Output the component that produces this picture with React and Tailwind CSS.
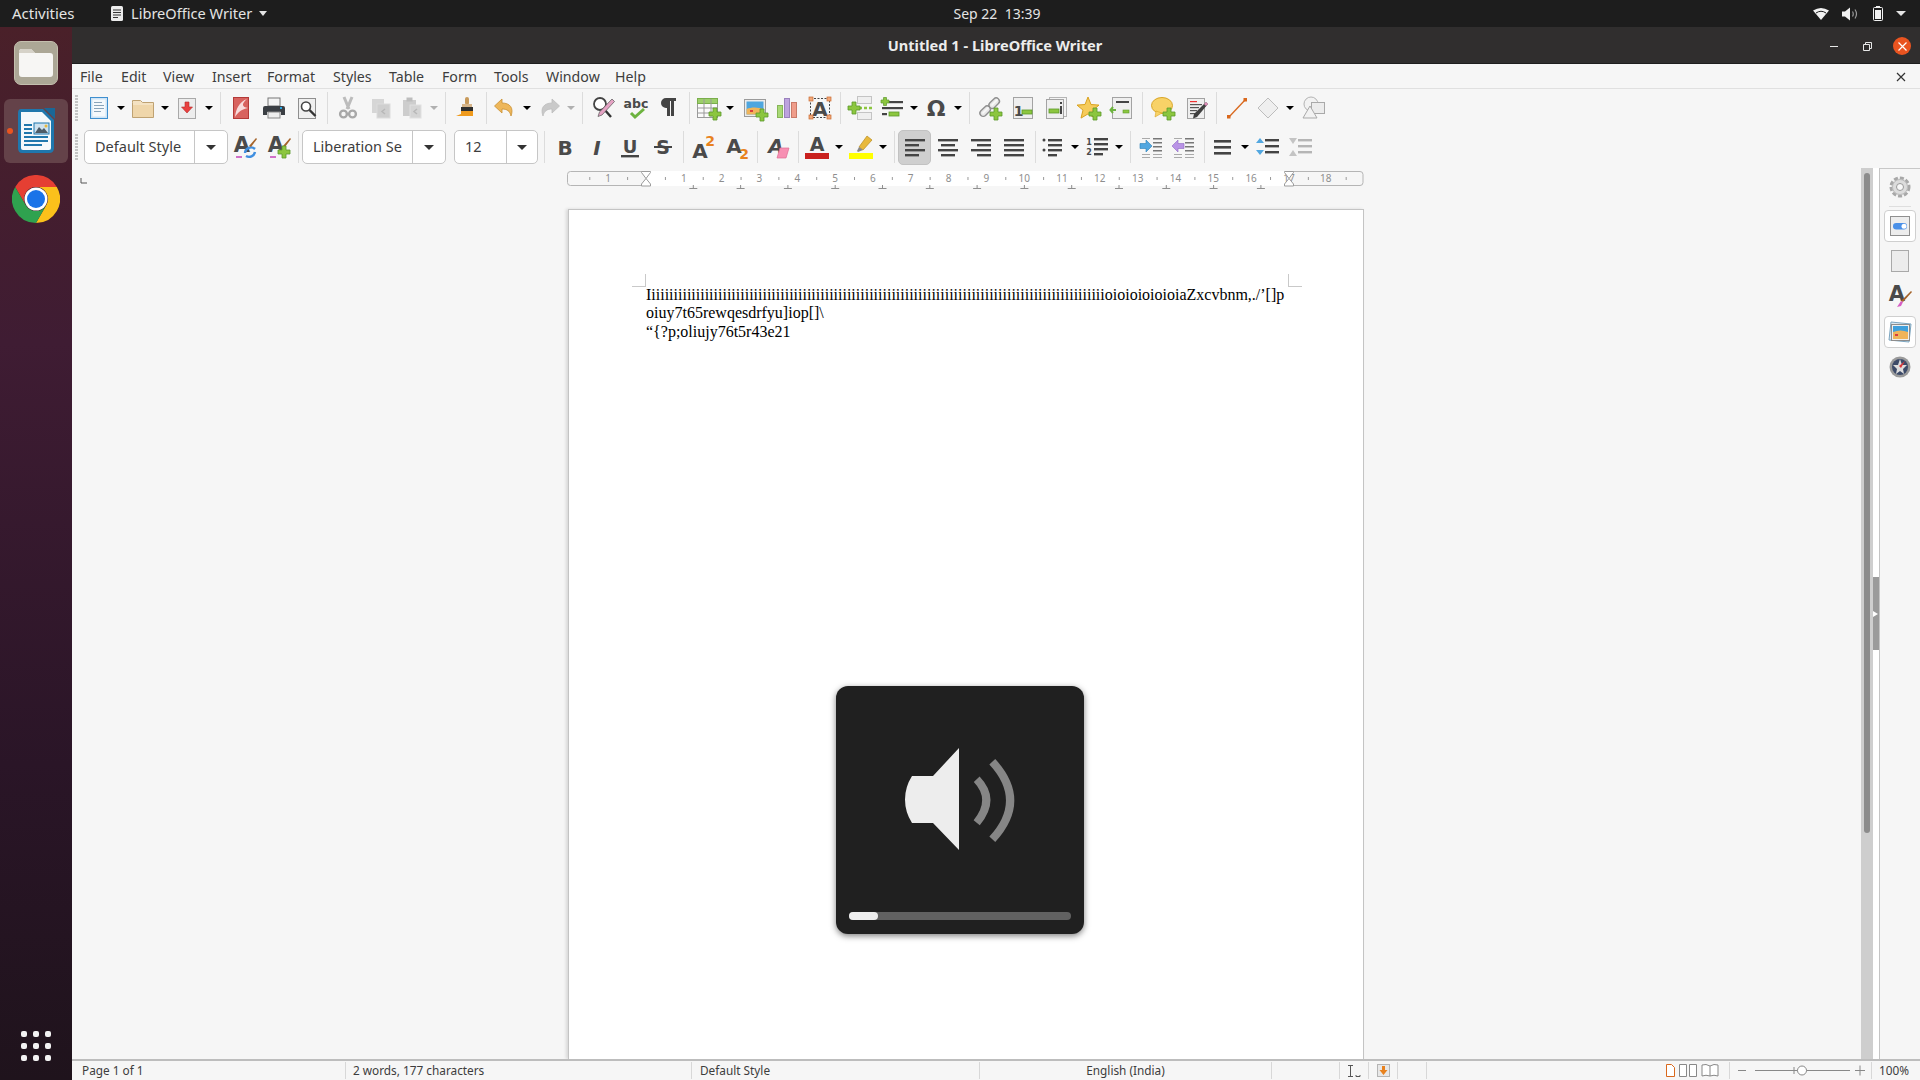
const UI = "font-['Noto_Sans',sans-serif]";

// ---------- small drawing helpers ----------
function S({ w = 24, h = 24, children }) {
  return (
    <svg width={w} height={h} viewBox={`0 0 ${w} ${h}`} className="shrink-0 block overflow-visible">
      {children}
    </svg>
  );
}
const Plus = ({ x, y }) => (
  <path
    d={`M${x - 2} ${y - 6}h4v4h4v4h-4v4h-4v-4h-4v-4h4z`}
    fill="#8cc63f"
    stroke="#5c9a2c"
    strokeWidth="0.8"
  />
);
const Minus = ({ x, y }) => <rect x={x} y={y} width="10" height="4" fill="#8cc63f" stroke="#5c9a2c" strokeWidth="0.8" />;
const Letter = ({ x = 12, y = 19, size = 22, fill = '#4a4a4a', children, style = 'normal' }) => (
  <text x={x} y={y} fontSize={size} fontWeight="700" fontStyle={style} fontFamily="'DejaVu Sans',sans-serif" textAnchor="middle" fill={fill}>
    {children}
  </text>
);
const Bars = ({ rows, h = 2.4, fill = '#444' }) => (
  <>
    {rows.map(([x, y, w], i) => (
      <rect key={i} x={x} y={y} width={w} height={h} fill={fill} />
    ))}
  </>
);

// ---------- toolbar row 1 ----------
const NewDoc = () => (
  <S>
    <rect x="3.5" y="1.5" width="17" height="21" fill="#cfe4f6" stroke="#3f8fcf" />
    <rect x="5.5" y="3.5" width="13" height="17" fill="#f6f9fc" />
    <Bars h={1} fill="#8aa4ba" rows={[[7, 6, 8], [7, 9, 10], [7, 12, 10], [7, 15, 7]]} />
  </S>
);
const OpenDoc = () => (
  <S>
    <path d="M1.5 6.5v-2h8l2 2h11v15h-21z" fill="#f4e2c2" stroke="#bfa272" />
    <rect x="2" y="9" width="20" height="12" fill="#efd6aa" />
  </S>
);
const SaveDoc = () => (
  <S>
    <rect x="3.5" y="2.5" width="17" height="20" fill="#ededed" stroke="#a9a9a9" />
    <path d="M10 6h4v5h3.5L12 17 6.5 11H10z" fill="#e8403f" stroke="#b52a2a" strokeWidth="0.6" />
  </S>
);
const Pdf = () => (
  <S>
    <rect x="4.5" y="1.5" width="15" height="21" fill="#d8635f" stroke="#b33a38" />
    <path d="M18 3C10 6 7 13 6 21c3-5 7-8 13-9-6-1-7-4-1-9z" fill="#f8dcdc" />
  </S>
);
const Print = () => (
  <S>
    <rect x="6" y="2" width="12" height="8" fill="#f4f4f4" stroke="#777" />
    <path d="M3 10h18q2 0 2 2v7h-4v-3H5v3H1v-7q0-2 2-2z" fill="#3b3f44" />
    <rect x="6" y="16" width="12" height="6" fill="#eee" stroke="#888" />
    <rect x="18" y="11" width="2" height="2" fill="#2aa5e0" />
  </S>
);
const Preview = () => (
  <S>
    <rect x="3.5" y="2.5" width="17" height="20" fill="#efefef" stroke="#8f8f8f" />
    <circle cx="11" cy="10.5" r="4.5" fill="#fff" stroke="#444" strokeWidth="1.6" />
    <path d="M14.5 14l6 6" stroke="#333" strokeWidth="2.4" />
  </S>
);
const Scissors = () => (
  <S>
    <path d="M8 1l5 12M16 1l-5 12" stroke="#bcbcbc" strokeWidth="3" />
    <circle cx="7.5" cy="18" r="3.4" fill="none" stroke="#a8a8a8" strokeWidth="2.4" />
    <circle cx="16.5" cy="18" r="3.4" fill="none" stroke="#a8a8a8" strokeWidth="2.4" />
  </S>
);
const CopyI = () => (
  <S>
    <rect x="3" y="3" width="12" height="14" fill="#d6d6d6" />
    <rect x="8" y="8" width="13" height="14" fill="#cfcfcf" stroke="#dcdcdc" />
    <path d="M16 13l-3 2.5 3 2.5" fill="none" stroke="#b8b8b8" strokeWidth="1.5" />
  </S>
);
const PasteI = () => (
  <S>
    <rect x="3" y="4" width="13" height="16" fill="#cdcdcd" />
    <rect x="6.5" y="1.5" width="6" height="4" fill="#bdbdbd" />
    <rect x="10" y="9" width="11" height="13" fill="#d4d4d4" stroke="#e0e0e0" />
    <path d="M17 13l-3 2.5 3 2.5" fill="none" stroke="#b8b8b8" strokeWidth="1.5" />
  </S>
);
const Brush = () => (
  <S>
    <rect x="11" y="1" width="4" height="8" rx="2" fill="#c89a5b" />
    <rect x="8" y="8" width="10" height="3" fill="#d6b58a" />
    <rect x="7" y="11" width="12" height="4" fill="#2f2f2f" />
    <path d="M7 15h12v5H2l5-2z" fill="#ef9a1c" />
  </S>
);
const Undo = ({ fill = '#eeb75a', stroke = '#c98f31', flip }) => (
  <S>
    <g transform={flip ? 'matrix(-1 0 0 1 24 0)' : undefined}>
      <path d="M9 3L1.5 10 9 17v-4c5 0 8 2 9 7 3-8-1-13-9-13z" fill={fill} stroke={stroke} strokeWidth="0.8" />
    </g>
  </S>
);
const Find = () => (
  <S>
    <circle cx="9" cy="8" r="6" fill="#fff" stroke="#444" strokeWidth="1.8" />
    <path d="M13 13l7 8" stroke="#333" strokeWidth="2.4" />
    <path d="M21 3l2.5 2.5L11 19l-4 1.5L8.5 16z" fill="#e5a3c4" stroke="#555" strokeWidth="0.7" />
  </S>
);
const Spell = () => (
  <S>
    <Letter y={12} size={12.5}>abc</Letter>
    <path d="M7 17l4 4 9-8" fill="none" stroke="#6db33f" strokeWidth="3" />
  </S>
);
const Pilcrow = () => (
  <S>
    <path d="M10 20V12H9a5 5 0 0 1 0-10h10v3h-2v15h-3V5h-1v15z" fill="#444" />
  </S>
);
const Grid = () => (
  <S>
    <rect x="1.5" y="2.5" width="20" height="19" fill="#fbfbfb" stroke="#9a9a9a" />
    <rect x="1.5" y="2.5" width="20" height="5" fill="#9ccf6a" stroke="#7aae4b" />
    <path d="M8 3v18M15 3v18M2 12h19M2 17h19" stroke="#9a9a9a" />
    <Plus x={19} y={18} />
  </S>
);
const Photo = ({ plus = true }) => (
  <S>
    <rect x="1.5" y="3.5" width="21" height="17" fill="#ececec" stroke="#9b9b9b" />
    <rect x="3.5" y="5.5" width="17" height="13" fill="#4ea6df" />
    <path d="M3.5 13c5-2 11-2 17 0v5.5h-17z" fill="#f0b45a" />
    <rect x="7" y="14" width="3" height="2" fill="#d93d3d" />
    {plus && <Plus x={19} y={19} />}
  </S>
);
const Chart = () => (
  <S>
    <rect x="2.5" y="9.5" width="5" height="12" fill="#a9d977" stroke="#86b656" />
    <rect x="9.5" y="2.5" width="5" height="19" fill="#bda3df" stroke="#9a81bd" />
    <rect x="16.5" y="6.5" width="5" height="15" fill="#ef9d8b" stroke="#c97a69" />
  </S>
);
const TextBox = () => (
  <S>
    <rect x="2.5" y="2.5" width="19" height="19" fill="none" stroke="#444" strokeDasharray="2 1.5" />
    <Letter y={19.5} size={20}>A</Letter>
    {[[1, 1], [19, 1], [1, 19], [19, 19]].map(([x, y]) => (
      <rect key={x + '' + y} x={x} y={y} width="4" height="4" fill="#f0a77a" stroke="#c96a30" strokeWidth="0.7" />
    ))}
  </S>
);
const PageBreak = () => (
  <S>
    <rect x="8.5" y="0.5" width="14" height="7" fill="#efefef" stroke="#c4c4c4" />
    <rect x="8.5" y="16.5" width="14" height="7" fill="#efefef" stroke="#c4c4c4" />
    <path d="M10 12h3M15 12h3M20 12h3" stroke="#8cc63f" strokeWidth="2.4" />
    <Plus x={5} y={12} />
  </S>
);
const Field = () => (
  <S>
    <Bars h={2.2} rows={[[9, 5, 14], [2, 11, 21], [2, 17, 5]]} />
    <path d="M3.5 1.5h3v2.500h2.500v3H6.500v2.500h-3V7H1V4h2.500z" fill="#8cc63f" stroke="#5c9a2c" strokeWidth="0.7" />
    <Minus x={9} y={16} />
  </S>
);
const Omega = () => (
  <S>
    <Letter y={19.5} size={22}>Ω</Letter>
  </S>
);
const LinkI = () => (
  <S>
    <g fill="none" stroke="#8f8f8f" strokeWidth="1.4">
      <rect x="1" y="12" width="12" height="6.500" rx="3.200" transform="rotate(-45 7 15)" fill="#e8e8e8" />
      <rect x="10" y="4" width="12" height="6.500" rx="3.200" transform="rotate(-45 16 7)" fill="#e8e8e8" />
      <path d="M4.500 17.500l6-6M13.500 9.500l6-6" stroke="#f8f8f8" strokeWidth="1.600" />
    </g>
    <Plus x={18} y={18} />
  </S>
);
const Footnote = () => (
  <S>
    <rect x="2.5" y="1.5" width="19" height="21" fill="#efefef" stroke="#a3a3a3" />
    <Letter x={7.5} y={20} size={14}>1</Letter>
    <Minus x={11} y={14} />
  </S>
);
const Endnote = () => (
  <S>
    <rect x="5.5" y="1.5" width="17" height="19" fill="#f4f4f4" stroke="#b5b5b5" />
    <rect x="2.5" y="3.5" width="17" height="19" fill="#efefef" stroke="#a3a3a3" />
    <Minus x={5} y={13} />
    <rect x="16" y="6" width="2" height="2" fill="#444" />
    <rect x="16" y="10" width="2" height="8" fill="#444" />
  </S>
);
const Star = () => (
  <S>
    <path d="M11 1l3 7.500 8 .6-6 5 2 8-7-4.200-7 4.200 2-8-6-5 8-.6z" fill="#f6cb5a" stroke="#d9a21f" />
    <Plus x={18} y={18} />
  </S>
);
const CrossRef = () => (
  <S>
    <rect x="2.5" y="1.5" width="19" height="21" fill="#efefef" stroke="#a3a3a3" />
    <rect x="6" y="5" width="13" height="2" fill="#444" />
    <path d="M1 14h5M3 11l-2.500 3L3 17" fill="none" stroke="#6db33f" strokeWidth="2" />
    <rect x="13" y="14" width="6" height="3" fill="#8cc63f" stroke="#5c9a2c" strokeWidth="0.6" />
  </S>
);
const Comment = () => (
  <S>
    <ellipse cx="11" cy="9.5" rx="10.5" ry="8" fill="#f8d267" stroke="#d9a526" />
    <path d="M5 15l-1 6 7-4z" fill="#f8d267" stroke="#d9a526" strokeWidth="0.6" />
    <Plus x={18} y={18} />
  </S>
);
const Track = () => (
  <S>
    <rect x="2.5" y="2.5" width="17" height="20" fill="#efefef" stroke="#a3a3a3" />
    <Bars h={1.2} fill="#e33" rows={[[5, 5, 7]]} />
    <Bars h={1.2} fill="#555" rows={[[5, 8, 12], [5, 11, 9], [5, 14, 7], [5, 17, 5]]} />
    <path d="M21 6l2 2-11 13-4 1.500L9 18z" fill="#3f3f3f" />
    <path d="M21 6l2 2-2 2-2-2z" fill="#dd8db8" />
  </S>
);
const LineI = () => (
  <S>
    <path d="M4 21L20 4" stroke="#d9681d" strokeWidth="1.3" />
    <rect x="2" y="19" width="3.5" height="3.5" fill="#d9681d" />
    <rect x="18.5" y="2" width="3.5" height="3.5" fill="#d9681d" />
  </S>
);
const Diamond = () => (
  <S>
    <path d="M12 2l10 10-10 10L2 12z" fill="#efefef" stroke="#bdbdbd" />
  </S>
);
const Shapes = () => (
  <S>
    <circle cx="9" cy="8" r="7" fill="#f2f2f2" stroke="#b3b3b3" />
    <rect x="9.5" y="6.5" width="13" height="11" fill="#ececec" stroke="#a9a9a9" />
    <path d="M8 10l7 12H1z" fill="#f2f2f2" stroke="#a9a9a9" />
  </S>
);

// ---------- toolbar row 2 ----------
const StyleUpdate = () => (
  <S>
    <Letter x={9} y={17} size={21}>A</Letter>
    <path d="M12 18a6 6 0 0 1 10-4M22 17a6 6 0 0 1-9 4" fill="none" stroke="#3f8fe0" strokeWidth="2.4" />
    <path d="M23 3l1 1-6 8-2-1z" fill="#a5632a" />
    <rect x="3" y="21" width="6" height="2" fill="#d070c8" />
  </S>
);
const StyleNew = () => (
  <S>
    <Letter x={9} y={17} size={21}>A</Letter>
    <path d="M23 3l1 1-6 8-2-1z" fill="#a5632a" />
    <rect x="3" y="21" width="6" height="2" fill="#d070c8" />
    <Plus x={17} y={17} />
  </S>
);
const Bold = () => <S><Letter y={20} size={20}>B</Letter></S>;
const Italic = () => <S><Letter y={20} size={20} style="italic">I</Letter></S>;
const Under = () => (
  <S>
    <Letter y={18} size={18}>U</Letter>
    <rect x="3" y="20" width="18" height="2.4" fill="#444" />
  </S>
);
const Strike = () => (
  <S>
    <Letter y={19} size={19}>S</Letter>
    <rect x="3" y="11" width="18" height="2" fill="#444" />
  </S>
);
const Super = () => (
  <S>
    <Letter x={9} y={23} size={20}>A</Letter>
    <Letter x={19} y={11} size={14} fill="#e8821e">2</Letter>
  </S>
);
const Sub = () => (
  <S>
    <Letter x={9} y={18} size={20}>A</Letter>
    <Letter x={19} y={24} size={14} fill="#e8821e">2</Letter>
  </S>
);
const Clear = () => (
  <S>
    <Letter x={10} y={18} size={20} style="italic">A</Letter>
    <path d="M14 13h9l-3 10h-9z" fill="#f78fb3" stroke="#de6a94" strokeWidth="0.7" />
  </S>
);
const FontColor = () => (
  <S>
    <Letter y={16} size={19}>A</Letter>
    <rect x="0" y="18" width="24" height="6" fill="#c9211e" />
  </S>
);
const Highlight = () => (
  <S>
    <path d="M10 12L18 1l5 4-9 10z" fill="#e8b93c" stroke="#b98d20" strokeWidth="0.7" />
    <path d="M10 12l4 3-5 2-1-1z" fill="#888" />
    <rect x="0" y="18" width="24" height="6" fill="#ffff00" />
  </S>
);
const AlignL = () => <S><Bars rows={[[2, 4, 20], [2, 9, 14], [2, 14, 20], [2, 19, 14]]} /></S>;
const AlignC = () => <S><Bars rows={[[2, 4, 20], [5, 9, 14], [2, 14, 20], [5, 19, 14]]} /></S>;
const AlignR = () => <S><Bars rows={[[2, 4, 20], [8, 9, 14], [2, 14, 20], [8, 19, 14]]} /></S>;
const AlignJ = () => <S><Bars rows={[[2, 4, 20], [2, 9, 20], [2, 14, 20], [2, 19, 20]]} /></S>;
const Bullets = () => (
  <S>
    <Bars rows={[[7, 4, 14], [7, 9, 14], [7, 14, 14], [7, 19, 9]]} />
    <circle cx="3" cy="5" r="1.5" fill="#444" />
    <circle cx="3" cy="15" r="1.5" fill="#444" />
  </S>
);
const Numbered = () => (
  <S>
    <Bars rows={[[9, 3, 14], [9, 8, 14], [9, 13, 14], [9, 18, 9]]} />
    <Letter x={4} y={10} size={8}>1</Letter>
    <Letter x={4} y={20} size={8}>2</Letter>
  </S>
);
const Indent = ({ back }) => (
  <S>
    <Bars h={1.5} fill="#777" rows={[[14, 3, 9], [14, 7, 9], [14, 11, 9], [14, 15, 9]]} />
    <Bars h={1} fill="#aaa" rows={[[3, 3, 8], [3, 19, 8], [3, 22, 8], [14, 19, 9], [14, 22, 9]]} />
    {back ? (
      <path d="M1 11l6-6v3.500h6v5H7V17z" fill="#b993e6" stroke="#8f68c4" strokeWidth="0.6" />
    ) : (
      <path d="M13 11L7 5v3.500H1v5h6V17z" fill="#52a7e0" stroke="#2a7fb8" strokeWidth="0.6" />
    )}
  </S>
);
const Spacing = () => <S><Bars h={2.6} rows={[[3, 5, 17], [3, 11, 17], [3, 17, 17]]} /></S>;
const SpaceUp = () => (
  <S>
    <Bars h={2.4} rows={[[9, 4, 14], [9, 10, 14], [9, 16, 14]]} />
    <path d="M4 3l4 5H0zM4 20L0 15h8z" fill="#52a7e0" />
  </S>
);
const SpaceDown = () => (
  <S>
    <Bars h={2.4} fill="#b5b5b5" rows={[[9, 4, 14], [9, 10, 14], [9, 16, 14]]} />
    <path d="M0 3h8L4 9zM0 21h8l-4-6z" fill="#c4c4c4" />
  </S>
);

const Arrow = ({ dim }) => (
  <div className="w-[22px] flex justify-center">
    <div className={`w-0 h-0 border-x-[4px] border-x-transparent border-t-[4px] ${dim ? 'border-t-[#b0b0b0]' : 'border-t-black'}`} />
  </div>
);
const Sep = ({ className = '' }) => <div className={`w-px h-[32px] bg-[#dcdcdc] shrink-0 ${className}`} />;
const Slot = ({ className = '', Icon }) => (
  <div className={`w-[22px] flex justify-center shrink-0 ${className}`}>
    <Icon />
  </div>
);
const Handle = () => (
  <div className="ml-[3px] w-[3px] h-[26px] bg-[repeating-linear-gradient(to_bottom,#c4c4c4_0_2px,transparent_2px_3px)] shrink-0" />
);

const Combo = ({ label, outer, inner }) => (
  <div className={`h-[34px] flex shrink-0 bg-white border border-[#c6c6c6] rounded-[5px] ${outer}`}>
    <div className={`pl-[10px] flex items-center text-[14.5px] text-[#3d3d3d] overflow-hidden whitespace-nowrap border-r border-[#c6c6c6] ${inner}`}>
      {label}
    </div>
    <div className="flex-1 flex items-center justify-center">
      <div className="w-0 h-0 border-x-[5px] border-x-transparent border-t-[5px] border-t-[#333]" />
    </div>
  </div>
);

function Toolbar1() {
  return (
    <div className="h-[38px] flex items-center">
      <Handle />
      <Slot className="ml-[10px]" Icon={NewDoc} /><Arrow />
      <Slot Icon={OpenDoc} /><Arrow />
      <Slot Icon={SaveDoc} /><Arrow />
      <Sep />
      <Slot className="ml-[9px]" Icon={Pdf} />
      <Slot className="ml-[11px]" Icon={Print} />
      <Slot className="ml-[11px]" Icon={Preview} />
      <Sep className="ml-[9px]" />
      <Slot className="ml-[9px]" Icon={Scissors} />
      <Slot className="ml-[11px]" Icon={CopyI} />
      <Slot className="ml-[9px]" Icon={PasteI} /><Arrow dim />
      <Sep />
      <Slot className="ml-[9px]" Icon={Brush} />
      <Sep className="ml-[9px]" />
      <Slot className="ml-[7px]" Icon={Undo} /><Arrow />
      <Slot Icon={() => <Undo flip fill="#c9c9c9" stroke="#bdbdbd" />} /><Arrow dim />
      <Sep />
      <Slot className="ml-[9px]" Icon={Find} />
      <Slot className="ml-[11px]" Icon={Spell} />
      <Slot className="ml-[11px]" Icon={Pilcrow} />
      <Sep className="ml-[9px]" />
      <Slot className="ml-[7px]" Icon={Grid} /><Arrow />
      <Slot className="ml-[3px]" Icon={Photo} />
      <Slot className="ml-[10px]" Icon={Chart} />
      <Slot className="ml-[11px]" Icon={TextBox} />
      <Sep className="ml-[9px]" />
      <Slot className="ml-[9px]" Icon={PageBreak} />
      <Slot className="ml-[9px]" Icon={Field} /><Arrow />
      <Slot Icon={Omega} /><Arrow />
      <Sep />
      <Slot className="ml-[9px]" Icon={LinkI} />
      <Slot className="ml-[11px]" Icon={Footnote} />
      <Slot className="ml-[11px]" Icon={Endnote} />
      <Slot className="ml-[11px]" Icon={Star} />
      <Slot className="ml-[11px]" Icon={CrossRef} />
      <Sep className="ml-[9px]" />
      <Slot className="ml-[9px]" Icon={Comment} />
      <Slot className="ml-[12px]" Icon={Track} />
      <Sep className="ml-[8px]" />
      <Slot className="ml-[9px]" Icon={LineI} />
      <Slot className="ml-[9px]" Icon={Diamond} /><Arrow />
      <Slot className="ml-[2px]" Icon={Shapes} />
    </div>
  );
}

function Toolbar2() {
  return (
    <div className="h-[38px] mt-px flex items-center">
      <Handle />
      <Combo label="Default Style" outer="ml-[6px] w-[144px]" inner="w-[110px]" />
      <Slot className="ml-[6px]" Icon={StyleUpdate} />
      <Slot className="ml-[12px]" Icon={StyleNew} />
      <Sep className="ml-[8px]" />
      <Combo label="Liberation Se" outer="ml-[3px] w-[144px]" inner="w-[110px]" />
      <Combo label="12" outer="ml-[8px] w-[84px]" inner="w-[52px]" />
      <Sep className="ml-[6px]" />
      <Slot className="ml-[9px]" Icon={Bold} />
      <Slot className="ml-[10px]" Icon={Italic} />
      <Slot className="ml-[11px]" Icon={Under} />
      <Slot className="ml-[11px]" Icon={Strike} />
      <Sep className="ml-[9px]" />
      <Slot className="ml-[8px]" Icon={Super} />
      <Slot className="ml-[12px]" Icon={Sub} />
      <Sep className="ml-[9px]" />
      <Slot className="ml-[9px]" Icon={Clear} />
      <Sep className="ml-[9px]" />
      <Slot className="ml-[7px]" Icon={FontColor} /><Arrow />
      <Slot Icon={Highlight} /><Arrow />
      <Sep />
      <div className="ml-[3px] w-[33px] h-[35px] flex items-center justify-center rounded-[5px] bg-[#cfcfcf] border border-[#c2c2c2] shrink-0">
        <AlignL />
      </div>
      <Slot className="ml-[6px]" Icon={AlignC} />
      <Slot className="ml-[11px]" Icon={AlignR} />
      <Slot className="ml-[11px]" Icon={AlignJ} />
      <Sep className="ml-[10px]" />
      <Slot className="ml-[6px]" Icon={Bullets} /><Arrow />
      <Slot Icon={Numbered} /><Arrow />
      <Sep />
      <Slot className="ml-[9px]" Icon={Indent} />
      <Slot className="ml-[10px]" Icon={() => <Indent back />} />
      <Sep className="ml-[10px]" />
      <Slot className="ml-[7px]" Icon={Spacing} /><Arrow />
      <Slot className="ml-px" Icon={SpaceUp} />
      <Slot className="ml-[11px]" Icon={SpaceDown} />
    </div>
  );
}

// ---------- ruler ----------
function Ruler() {
  const cm = 37.82;
  const x0 = 79;
  const nums = [];
  for (let n = 1; n <= 17; n++) nums.push(n);
  const ticks = [];
  for (let n = -2; n <= 18; n++) {
    ticks.push(x0 + (n + 0.5) * cm);
  }
  const tabs = [];
  for (let n = 1; n <= 13; n++) tabs.push(x0 + n * 47.3);
  const marker = (x) => (
    <path d={`M${x - 4.5} .5h9v1L${x} 7.5l4.5 5.5v2h-9V13L${x} 7.5 ${x - 4.5} 1.5z`} fill="#fff" stroke="#9c9c9c" />
  );
  return (
    <svg width="798" height="20" viewBox="0 0 798 20" className="block ml-[495px] shrink-0">
      <rect x={x0} y="0" width="643" height="15" fill="#fff" />
      <path d={`M${x0} .5H3.5q-3 0-3 3v8q0 3 3 3H${x0}`} fill="none" stroke="#b5b5b5" />
      <path d="M722 .5H793q3 0 3 3v8q0 3-3 3H722" fill="none" stroke="#b5b5b5" />
      {ticks.map((x) => (
        <rect key={x} x={x} y="6" width="1" height="3" fill="#9a9a9a" />
      ))}
      <text x={x0 - cm} y="11" fontSize="10" textAnchor="middle" fill="#8e8e8e" fontFamily="'Noto Sans',sans-serif">1</text>
      {nums.map((n) => (
        <text key={n} x={x0 + n * cm} y="11" fontSize="10" textAnchor="middle" fill="#8e8e8e" fontFamily="'Noto Sans',sans-serif">{n}</text>
      ))}
      <text x={x0 + 18 * cm - 1} y="11" fontSize="10" textAnchor="middle" fill="#8e8e8e" fontFamily="'Noto Sans',sans-serif">18</text>
      {tabs.map((x) => (
        <path key={x} d={`M${x} 14v3M${x - 4} 17.5h8`} stroke="#8e8e8e" fill="none" />
      ))}
      {marker(x0)}
      {marker(722)}
    </svg>
  );
}

// ---------- dock ----------
function Dock() {
  return (
    <div className="w-[72px] shrink-0 h-full flex flex-col items-center bg-[linear-gradient(180deg,#4a2029_0%,#3f1c33_30%,#2a1527_70%,#1f131c_100%)]">
      <div className="mt-[14px] w-[44px] h-[44px] rounded-[7px] bg-[#aca796] border border-[#c4bfae] flex items-center justify-center">
        <svg width="34" height="28" viewBox="0 0 34 28">
          <path d="M0 3q0-3 3-3h9l4 4h15q3 0 3 3v18q0 3-3 3H3q-3 0-3-3z" fill="#f7f6f4" />
          <path d="M0 3q0-3 3-3h9l4 4H0z" fill="#d6d2c8" />
        </svg>
      </div>
      <div className="mt-[14px] w-[64px] h-[64px] rounded-[6px] bg-[#644249] flex items-center justify-center relative">
        <div className="absolute left-[3px] top-[29px] w-[6px] h-[6px] rounded-full bg-[#e95420]" />
        <svg width="38" height="46" viewBox="0 0 38 46">
          <path d="M4 1h22l11 11v28q0 5-5 5H5q-4 0-4-5V5q0-4 3-4z" fill="#1f77ad" />
          <path d="M4 4h21l9 9v27q0 2-2 2H6q-2 0-2-2z" fill="#f4f8fb" />
          <path d="M27 0l11 0v11z" fill="#1a6797" />
          <path d="M7 16h8v2H7zM7 20h8v2H7zM7 24h8v2H7zM7 28h24v2H7zM7 32h24v2H7zM7 36h18v2H7z" fill="#1f77ad" />
          <rect x="17" y="15" width="15" height="11" fill="#cfe2ef" stroke="#1f77ad" />
          <path d="M18 25l4-6 3 3 2-2 4 5z" fill="#4d5b66" />
          <circle cx="29" cy="18" r="1.5" fill="#e8b93c" />
        </svg>
      </div>
      <svg width="48" height="48" viewBox="0 0 48 48" className="mt-[12px]">
        <path d="M3.2 12A24 24 0 0 1 44.8 12H24A12 12 0 0 0 13.6 30z" fill="#e53f33" />
        <path d="M44.8 12A24 24 0 0 1 24 48L34.4 30A12 12 0 0 0 24 12z" fill="#fbc11b" />
        <path d="M24 48A24 24 0 0 1 3.2 12L13.6 30A12 12 0 0 0 34.4 30z" fill="#2fa24f" />
        <circle cx="24" cy="24" r="11.5" fill="#fff" />
        <circle cx="24" cy="24" r="9" fill="#1a73e8" />
      </svg>
      <div className="mt-auto mb-[19px] grid grid-cols-3 gap-x-[6px] gap-y-[6px]">
        {[0, 1, 2, 3, 4, 5, 6, 7, 8].map((i) => (
          <div key={i} className="w-[6px] h-[6px] rounded-[2px] bg-[#f2f2f2]" />
        ))}
      </div>
    </div>
  );
}

// ---------- sidebar ----------
function Sidebar() {
  return (
    <div className="w-[40px] shrink-0 mt-[2px] border-t border-[#c8c8c8] flex flex-col items-center bg-[#f6f6f6]">
      <svg width="24" height="24" viewBox="0 0 24 24" className="mt-[6px]">
        <circle cx="12" cy="12" r="9" fill="#e6e6e6" stroke="#a8a8a8" strokeWidth="3" strokeDasharray="4 2" />
        <circle cx="12" cy="12" r="7.5" fill="#dcdcdc" stroke="#bcbcbc" />
        <circle cx="12" cy="12" r="3.5" fill="#f8f8f8" stroke="#999" />
      </svg>
      <div className="mt-[7px] w-[22px] h-px bg-[#dedede]" />
      <div className="mt-[3px] w-[32px] h-[32px] rounded-[4px] bg-white border border-[#cfcfcf] flex items-center justify-center">
        <svg width="20" height="20" viewBox="0 0 20 20">
          <rect x=".5" y=".5" width="19" height="19" fill="#ededed" stroke="#8f8f8f" />
          <rect x="3" y="7" width="14" height="6.5" rx="3.2" fill="#4a90e8" />
          <circle cx="14" cy="10.2" r="2.5" fill="#fff" />
        </svg>
      </div>
      <div className="mt-[8px] w-[18px] h-[22px] bg-[#ececec] border border-[#a9a9a9]" />
      <div className="mt-[12px] h-[24px] flex items-center">
        <svg width="24" height="24" viewBox="0 0 24 24" className="overflow-visible">
          <Letter x={9} y={17} size={21}>A</Letter>
          <path d="M23 7l1 1-9 10-2-1z" fill="#a5632a" />
          <path d="M13 17l2 1-2 4-4 1z" fill="#d65fc4" />
        </svg>
      </div>
      <div className="mt-[8px] w-[32px] h-[32px] rounded-[4px] bg-white border border-[#cfcfcf] flex items-center justify-center">
        <svg width="24" height="22" viewBox="0 0 24 22">
          <path d="M3 1l20 2-2 18-20-2z" fill="#dfe9ef" stroke="#7aa4bf" />
          <rect x="3.5" y="3.5" width="18" height="16" fill="#efefef" stroke="#8d8d8d" />
          <rect x="5" y="5" width="15" height="13" fill="#3fa0dc" />
          <path d="M5 11c5-2 10-2 15 0v7H5z" fill="#f0b45a" />
          <rect x="7" y="13" width="3" height="2" fill="#d93d3d" />
        </svg>
      </div>
      <svg width="22" height="22" viewBox="0 0 22 22" className="mt-[8px]">
        <circle cx="11" cy="11" r="10.5" fill="#9a9a9a" />
        <circle cx="11" cy="11" r="8" fill="#3c4a68" />
        <path d="M11 3l2 6 5 0-4 4 1 5-4-3-4 3 1-5-4-4 5 0z" fill="#dcdcdc" />
        <path d="M16 5l-4 7-2-2z" fill="#d9363a" />
      </svg>
    </div>
  );
}

const StatusCell = ({ className = '', children }) => (
  <div className={`h-[17px] flex items-center shrink-0 border-l border-[#d8d8d8] ${className}`}>{children}</div>
);

export default function App() {
  return (
    <div className={`${UI} relative w-[1920px] h-[1080px] overflow-hidden flex flex-col bg-[#f6f6f6]`}>
      {/* Top bar */}
      <div className="h-[27px] shrink-0 bg-[#1d1d1d] flex items-center text-[14px] text-[#e4e4e4]">
        <span className="ml-[12px] w-[99px] text-[15px]">Activities</span>
        <svg width="12" height="15" viewBox="0 0 12 15" className="shrink-0">
          <rect width="12" height="15" rx="1.5" fill="#ececec" />
          <path d="M2 4h8M2 6.5h8M2 9h8M2 11.5h5" stroke="#333" />
        </svg>
        <span className="ml-[8px] whitespace-nowrap w-[128px] text-[14.6px]">LibreOffice Writer</span>
        <div className="w-0 h-0 border-x-[4px] border-x-transparent border-t-[5px] border-t-[#e4e4e4]" />
        <span className="ml-[685px] w-[90px] whitespace-pre text-center">Sep 22  13:39</span>
        <svg width="18" height="14" viewBox="0 0 18 14" className="ml-[770px] shrink-0">
          <path d="M9 13L1 3.5Q9-1.5 17 3.5z" fill="#f2f2f2" />
          <path d="M4 6Q9 2.5 14 6" fill="none" stroke="#1d1d1d" />
        </svg>
        <svg width="16" height="14" viewBox="0 0 16 14" className="ml-[12px] shrink-0">
          <path d="M0 4.5h3L8 .5v13L3 9.5H0z" fill="#f2f2f2" />
          <path d="M10.5 4.5q1.5 2.5 0 5M13 2.5q3 4.5 0 9" fill="none" stroke="#9a9a9a" strokeWidth="1.2" />
        </svg>
        <svg width="10" height="15" viewBox="0 0 10 15" className="ml-[15px] shrink-0">
          <rect x="3" width="4" height="2" fill="#f2f2f2" />
          <rect x=".5" y="1.5" width="9" height="13" rx="1" fill="none" stroke="#f2f2f2" />
          <rect x="2" y="4" width="6" height="9" fill="#f2f2f2" />
        </svg>
        <div className="ml-[13px] w-0 h-0 border-x-[5px] border-x-transparent border-t-[5px] border-t-[#e4e4e4]" />
      </div>

      <div className="flex-1 flex min-h-0">
        <Dock />
        <div className="flex-1 min-w-0 flex flex-col">
          {/* Title bar */}
          <div className="h-[37px] pt-[2px] shrink-0 bg-[#302e2e] border-b border-[#1e1e1e] flex items-center text-[14.6px] font-bold text-[#ececec]">
            <span className="ml-[808px] w-[230px] text-center whitespace-nowrap">Untitled 1 - LibreOffice Writer</span>
            <div className="ml-[720px] w-[8px] h-px bg-[#e8e8e8]" />
            <svg width="9" height="9" viewBox="0 0 9 9" className="ml-[25px]">
              <path d="M2.5 2.5V.5h6v6h-2M.5 2.5h6v6h-6z" fill="none" stroke="#e8e8e8" />
            </svg>
            <div className="ml-[21px] w-[18px] h-[18px] rounded-full bg-[#e95420] flex items-center justify-center">
              <svg width="9" height="9" viewBox="0 0 9 9">
                <path d="M.5.5l8 8M8.5.5l-8 8" stroke="#fff" strokeWidth="1.2" />
              </svg>
            </div>
          </div>
          {/* Menu bar */}
          <div className="h-[25px] pt-px shrink-0 flex items-center text-[14.2px] text-[#3d3d3d] border-b border-[#e0e0e0]">
            <span className="ml-[8px] w-[41px]">File</span>
            <span className="w-[42px]">Edit</span>
            <span className="w-[49px]">View</span>
            <span className="w-[55px]">Insert</span>
            <span className="w-[66px]">Format</span>
            <span className="w-[56px]">Styles</span>
            <span className="w-[53px]">Table</span>
            <span className="w-[52px]">Form</span>
            <span className="w-[52px]">Tools</span>
            <span className="w-[69px]">Window</span>
            <span className="w-[40px]">Help</span>
            <svg width="10" height="10" viewBox="0 0 10 10" className="ml-[1241px]">
              <path d="M1 1l8 8M9 1l-8 8" stroke="#333" strokeWidth="1.2" />
            </svg>
          </div>
          <Toolbar1 />
          <Toolbar2 />
          {/* Work area */}
          <div className="flex-1 min-h-0 flex">
            <div className="flex-1 min-w-0 flex flex-col relative overflow-hidden">
              <svg width="7" height="6" viewBox="0 0 7 6" className="absolute left-[8px] top-[12px]">
                <path d="M1 0v5h6" fill="none" stroke="#555" />
              </svg>
              <div className="mt-[5px]">
                <Ruler />
              </div>
              <div className="mt-[18px] flex-1 min-h-0 ml-[496px] w-[796px] relative bg-white border-t border-x border-[#c4c4c4] shadow-[-2px_0_3px_rgba(0,0,0,0.12)] pt-[76px] pl-[77px] font-['Liberation_Serif',serif] text-[16px] leading-[18.4px] text-black whitespace-pre">
                <div className="absolute left-[63px] top-[64px] w-[14px] h-[13px] border-r border-b border-[#c9c9c9]" />
                <div className="absolute left-[719px] top-[64px] w-[14px] h-[13px] border-l border-b border-[#c9c9c9]" />
                <div>{'I' + 'i'.repeat(101) + 'io'.repeat(6) + 'iaZxcvbnm,./’[]p'}</div>
                <div>{'oiuy7t65rewqesdrfyu]iop[]\\'}</div>
                <div>{'“{?p;oliujy76t5r43e21'}</div>
              </div>
            </div>
            {/* Scrollbar */}
            <div className="w-[12px] shrink-0 mt-[2px] bg-[#cecece] flex justify-center pt-[5px]">
              <div className="w-[6px] h-[660px] bg-[#8c8c8c] rounded-full" />
            </div>
            <div className="w-[7px] shrink-0 mt-[2px] bg-white border-r border-[#c4c4c4] flex items-center">
              <div className="w-[6px] h-[73px] bg-[#9a9a9a] flex items-center">
                <div className="w-0 h-0 border-y-[3.5px] border-y-transparent border-l-[5px] border-l-white" />
              </div>
            </div>
            <Sidebar />
          </div>
          {/* Status bar */}
          <div className="h-[21px] shrink-0 border-t-2 border-[#bdbdbd] flex items-center text-[11.8px] text-[#3d3d3d]">
            <div className="w-[273px] pl-[10px] shrink-0">Page 1 of 1</div>
            <StatusCell className="w-[346px] pl-[7px]">2 words, 177 characters</StatusCell>
            <StatusCell className="w-[288px] pl-[8px]">Default Style</StatusCell>
            <StatusCell className="w-[292px] justify-center">English (India)</StatusCell>
            <StatusCell className="w-[68px]" />
            <StatusCell className="w-[29px] justify-center">
              <svg width="14" height="12" viewBox="0 0 14 12">
                <path d="M1 .5h5M3.5.5v11M1 11.5h5M9 10v1.5h4V10" fill="none" stroke="#555" />
              </svg>
            </StatusCell>
            <StatusCell className="w-[29px] justify-center">
              <svg width="13" height="13" viewBox="0 0 13 13">
                <rect x=".5" y=".5" width="12" height="12" fill="#e8e8e8" stroke="#b5b5b5" />
                <path d="M5 2h3v4h2.5l-4 5-4-5H5z" fill="#e8821e" />
              </svg>
            </StatusCell>
            <StatusCell className="w-[29px]" />
            <StatusCell className="w-[303px] justify-end pr-[10px] gap-[4px]">
              <svg width="10" height="13" viewBox="0 0 10 13">
                <path d="M1.5.5h5l3 3v9h-8z" fill="#fff" stroke="#d9681d" />
              </svg>
              <svg width="18" height="13" viewBox="0 0 18 13">
                <path d="M.5.5h7v12h-7zM10.5.5h7v12h-7z" fill="#fff" stroke="#888" />
              </svg>
              <svg width="18" height="13" viewBox="0 0 18 13">
                <path d="M9 2Q5-.5 1 1v11q4-1.5 8 0 4-1.5 8 0V1Q13-.5 9 2zM9 2v10" fill="#fff" stroke="#888" />
              </svg>
            </StatusCell>
            <StatusCell className="w-[142px]">
              <svg width="141" height="15" viewBox="0 0 141 15">
                <path d="M8 7.5h8M25 7.5h95M64 4v7M125 7.5h10M130 2.5v10" stroke="#888" fill="none" />
                <circle cx="72" cy="7.5" r="4.5" fill="#fff" stroke="#888" />
              </svg>
            </StatusCell>
            <StatusCell className="flex-1 pl-[7px] border-[#d8d8d8]">100%</StatusCell>
          </div>
        </div>
      </div>

      {/* Volume OSD */}
      <div className="absolute left-[836px] top-[686px] w-[248px] h-[248px] rounded-[12px] bg-[#202020] shadow-[0_2px_6px_rgba(0,0,0,0.5)] flex flex-col items-center">
        <svg width="110" height="102" viewBox="69 62 110 102" className="mt-[62px]">
          <path d="M123 62v102L97 137H76q-7-11-7-23.5T76 90h21z" fill="#ededed" />
          <path d="M140.7 93.3Q160 113.5 140.7 136.7" fill="none" stroke="#868686" strokeWidth="8" />
          <path d="M156.3 75.7Q192 114.5 156.3 153.3" fill="none" stroke="#868686" strokeWidth="8" />
        </svg>
        <div className="mt-[62px] w-[222px] h-[8px] rounded-full bg-[#616161] flex">
          <div className="w-[29px] h-full rounded-full bg-[#eeeeee]" />
        </div>
      </div>
    </div>
  );
}
